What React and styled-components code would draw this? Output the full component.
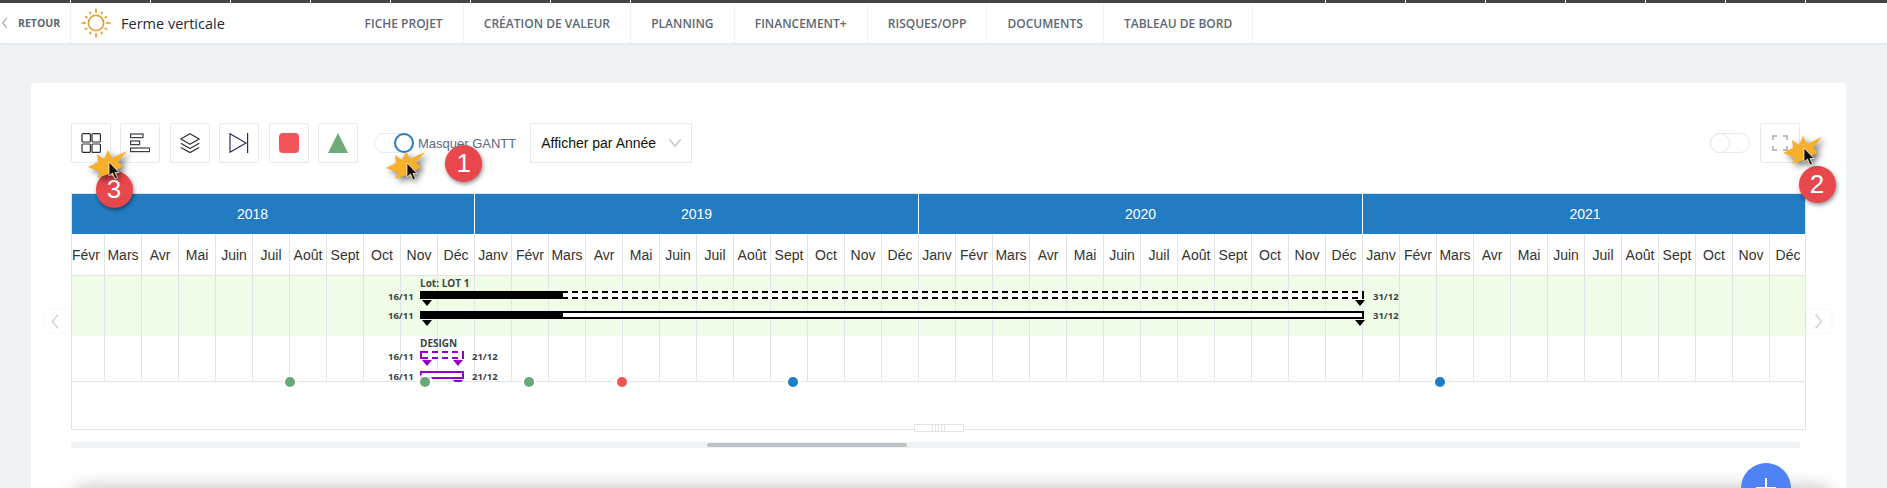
import React from "react";
import styled, { createGlobalStyle } from "styled-components";

const GlobalStyle = createGlobalStyle`
html, body {
    margin: 0;
    height: 488px;
    overflow: hidden;
    background: #f0f3f5;
}
* { box-sizing: border-box; }
`

const Page = styled.div`
position: relative;
width: 1887px;
height: 488px;
overflow: hidden;
font-family: "Liberation Sans", Arial, sans-serif;
`
const Strip = styled.div`
display: flex;
height: 3px;
background: #444444;
`
const Tick = styled.span`
width: 80px;
margin-left: ${p => p.$gap || 0}px;
border-left: 1px solid #ffffff;
`
const Header = styled.header`
position: relative;
display: flex;
height: 40px;
background: #ffffff;
box-shadow: 0 1px 3px rgba(0, 0, 0, .07);
font-family: "Open Sans", sans-serif;
`
const Back = styled.div`
display: flex;
align-items: center;
gap: 7px;
width: 71px;
padding-left: 1px;
border-right: 1px solid #f0f2f3;
font-size: 10.5px;
font-weight: 700;
color: #5c6670;
`
const Brand = styled.div`
display: flex;
align-items: center;
gap: 10px;
width: 273.5px;
padding-left: 10px;
`
const Title = styled.h1`
margin: 0;
font-size: 14.5px;
font-weight: 500;
color: #222a35;
`
const Nav = styled.nav`
display: flex;
`
const NavItem = styled.a`
display: flex;
align-items: center;
padding: 0 20.1px;
border-right: 1px solid #f0f2f3;
font-size: 12px;
font-weight: 600;
color: #5c6873;
white-space: nowrap;
`
const Main = styled.main`
padding: 40px 41px 0 31px;
`
const Card = styled.section`
height: 500px;
padding: 40px 40px 0;
background: #ffffff;
border-radius: 4px;
`
const Toolbar = styled.div`
display: flex;
align-items: center;
height: 40px;
margin-bottom: 30px;
`
const ToolGroup = styled.div`
display: flex;
gap: 9.4px;
`
const ToolButton = styled.button`
display: flex;
align-items: center;
justify-content: center;
width: 40px;
height: 40px;
margin: 0 ${p => p.$mr || 0}px 0 ${p => p.$ml || 0}px;
padding: 0;
background: #ffffff;
border: 1px solid #e7eaec;
border-radius: 2px;
`
const Toggle = styled.span`
display: flex;
justify-content: ${p => (p.$on ? "flex-end" : "flex-start")};
width: 40px;
height: 20px;
margin-left: ${p => p.$offset}px;
border: 1px solid #e7eaec;
border-radius: 10px;
background: #ffffff;
`
const Knob = styled.span`
width: 20px;
height: 20px;
margin: -1px;
border: ${p => (p.$on ? "2px solid #237cc2" : "1px solid #e2e5e7")};
border-radius: 50%;
background: #ffffff;
`
const ToggleLabel = styled.span`
margin: 0 14px 0 4px;
font-size: 13px;
color: #5a6b7b;
white-space: nowrap;
`
const Select = styled.div`
display: flex;
align-items: center;
justify-content: space-between;
width: 162px;
height: 40px;
padding: 0 9px 0 10px;
border: 1px solid #e7eaec;
font-size: 14px;
color: #111111;
`
const Spacer = styled.div`
flex: 1;
`
const Frame = styled.div`
position: relative;
width: 1735px;
height: 237px;
border: 1px solid #e2e5e8;
`
const Viewport = styled.div`
height: 100%;
overflow: hidden;
`
const Inner = styled.div`
width: 1776px;
margin-left: -41px;
`
const Years = styled.div`
display: grid;
grid-template-columns: repeat(4, 1fr);
height: 40px;
background: #237cc2;
`
const Year = styled.div`
display: flex;
align-items: center;
justify-content: center;
border-right: 1px solid #ffffff;
font-size: 14px;
color: #ffffff;
&:last-child { border-right: 0; }
`
const Months = styled.div`
display: grid;
grid-template-columns: repeat(48, 1fr);
height: 42px;
border-bottom: 1px solid #e2e5e8;
`
const Month = styled.div`
display: flex;
align-items: center;
justify-content: center;
border-right: 1px solid #e2e5e8;
font-size: 14px;
color: #333333;
white-space: nowrap;
`
const Rows = styled.div`
position: relative;
`
const Row = styled.div`
display: grid;
grid-template-columns: repeat(48, 1fr);
height: ${p => p.$height}px;
background: ${p => p.$bg};
border-bottom: ${p => (p.$line ? "1px solid #e2e5e8" : "0")};
`
const Cell = styled.span`
border-right: 1px solid #e2e5e8;
`
const BarLayer = styled.div`
position: absolute;
inset: 0;
overflow: hidden;
font-family: "Open Sans", sans-serif;
`
// everything on the time line is placed from page coordinates
const toX = x => x - 31;
const toY = y => y - 276;

const Label = styled.span`
position: absolute;
left: ${p => toX(p.$x)}px;
top: ${p => toY(p.$y)}px;
font-size: ${p => (p.$title ? 10 : 9.5)}px;
font-weight: 700;
line-height: 12px;
color: #3c4248;
white-space: nowrap;
`
const Bar = styled.div`
position: absolute;
left: ${p => toX(p.$x)}px;
top: ${p => toY(p.$y)}px;
width: ${p => p.$w}px;
height: 8px;
background-color: #ffffff;
${p => p.$dashed
    ? `
    border-left: 2px solid ${p.$color};
    border-right: 2px solid ${p.$color};
    background-image:
        repeating-linear-gradient(90deg, ${p.$color} 0 6px, transparent 6px 10px),
        repeating-linear-gradient(90deg, ${p.$color} 0 6px, transparent 6px 10px);
    background-size: 100% 2px;
    background-position: top, bottom;
    background-repeat: no-repeat;
    `
    : `border: 2px solid ${p.$color};`}
`
const Progress = styled.div`
position: absolute;
left: -2px;
top: ${p => (p.$dashed ? 0 : -2)}px;
width: 143px;
height: 8px;
background: #000000;
`
const Arrow = styled.span`
position: absolute;
left: ${p => toX(p.$x)}px;
top: ${p => toY(p.$y)}px;
width: 0;
height: 0;
border-left: 5px solid transparent;
border-right: 5px solid transparent;
border-top: 6px solid ${p => p.$color};
`
const Dot = styled.span`
position: absolute;
left: ${p => toX(p.$x) - 5}px;
top: 100.5px;
width: 10px;
height: 10px;
border-radius: 50%;
background: ${p => p.$color};
box-shadow: 0 0 0 3px rgba(255, 255, 255, .85);
`
const SideArrow = styled.div`
position: absolute;
top: 116px;
${p => (p.$left ? "left: -27px;" : "right: -26px;")}
display: flex;
align-items: center;
justify-content: center;
width: 24px;
height: 22px;
background: #ffffff;
box-shadow: 0 0 4px rgba(0, 0, 0, .06);
`
const Handle = styled.div`
position: absolute;
left: 50%;
bottom: -3px;
display: flex;
align-items: center;
justify-content: center;
gap: 2px;
width: 50px;
height: 8px;
margin-left: -25px;
background: #ffffff;
border: 1px solid #e2e5e8;
`
const Grip = styled.span`
width: 1px;
height: 100%;
background: #e2e5e8;
`
const Scrollbar = styled.div`
width: 1728.5px;
height: 6px;
margin-top: 12px;
padding-top: 1px;
background: #f0f3f5;
`
const Thumb = styled.div`
width: 200px;
height: 4px;
margin-left: 636px;
border-radius: 2px;
background: #bcc3c8;
`
const NextPanel = styled.div`
position: relative;
width: 1752px;
height: 80px;
margin: 42px 0 0 5px;
background: #ffffff;
border-radius: 4px;
box-shadow: 0 0 20px rgba(0, 0, 0, .32);
`
const Fab = styled.button`
position: absolute;
right: 37px;
top: -27px;
width: 50px;
height: 50px;
padding: 0;
border: 0;
border-radius: 50%;
background: #4f83f5;
&::before, &::after {
    content: "";
    position: absolute;
    background: #ffffff;
}
&::before { left: 24px; top: 15px; width: 2px; height: 20px; }
&::after { left: 15px; top: 24px; width: 20px; height: 2px; }
`
const Badge = styled.span`
position: absolute;
left: ${p => p.$x - 18.5}px;
top: ${p => p.$y - 18.5}px;
display: flex;
align-items: center;
justify-content: center;
width: 37px;
height: 37px;
border-radius: 50%;
background: #e8474c;
box-shadow: 1px 2px 4px rgba(0, 0, 0, .45);
font-size: 26px;
color: #ffffff;
`
const BurstWrap = styled.svg`
position: absolute;
left: ${p => p.$x - 21}px;
top: ${p => p.$y - 12}px;
overflow: visible;
`
const BurstStar = styled.polygon`
fill: #f6b02c;
filter: drop-shadow(3px 3px 3px rgba(0, 0, 0, .55));
`

const MONTH_NAMES = ["Janv", "Févr", "Mars", "Avr", "Mai", "Juin", "Juil", "Août", "Sept", "Oct", "Nov", "Déc"];
const YEARS = ["2018", "2019", "2020", "2021"];
// janv 2018 is scrolled out of the viewport, its column stays empty
const MONTHS = YEARS.flatMap(y => MONTH_NAMES.map(m => ({ key: `${y}-${m}`, label: y === "2018" && m === "Janv" ? "" : m })));
const MENU = ["FICHE PROJET", "CRÉATION DE VALEUR", "PLANNING", "FINANCEMENT+", "RISQUES/OPP", "DOCUMENTS", "TABLEAU DE BORD"];
const DOTS = [
    { x: 290, color: "#6aa878" },
    { x: 425, color: "#6aa878" },
    { x: 529, color: "#6aa878" },
    { x: 622, color: "#f25353" },
    { x: 793, color: "#1d7ec8" },
    { x: 1440, color: "#1d7ec8" },
];
const PURPLE = "#9400c8";

function Sun() {
    const rays = Array.from({ length: 12 }, (_, i) => i * 30);
    return (
        <svg width="30" height="30" viewBox="0 0 30 30" fill="none" stroke="#e9a23b" strokeWidth="1.8">
            <circle cx="15" cy="15" r="7.6" />
            {rays.map(a => (
                <line key={a} x1="15" y1={a % 90 === 0 ? 0.5 : 2} x2="15" y2="5" transform={`rotate(${a} 15 15)`} />
            ))}
        </svg>
    );
}

function Chevron({ dir = "left", color, size = 10 }) {
    const pts = { left: "7,1 2,6 7,11", right: "3,1 8,6 3,11", down: "1,3 6,8 11,3" }[dir];
    return (
        <svg width={size} height={size * 1.2} viewBox="0 0 12 12" fill="none" stroke={color} strokeWidth="1.2" preserveAspectRatio="none">
            <polyline points={pts} />
        </svg>
    );
}

function GridIcon() {
    return (
        <svg width="20" height="20" viewBox="0 0 20 20" fill="none" stroke="#2c2f38" strokeWidth="1.2">
            <rect x="1" y="0.6" width="8.4" height="8.4" rx="1" />
            <rect x="11" y="0.6" width="8.4" height="8.4" rx="1" />
            <rect x="1" y="11" width="8.4" height="8.4" rx="1" />
            <rect x="11" y="11" width="8.4" height="8.4" rx="1" />
        </svg>
    );
}

function GanttIcon() {
    return (
        <svg width="20" height="20" viewBox="0 0 20 20" fill="none" stroke="#3c3f48" strokeWidth="1.2">
            <rect x="0.6" y="1" width="12.4" height="3.6" />
            <rect x="0.6" y="8" width="9" height="3.6" />
            <rect x="0.6" y="15" width="19" height="3.6" />
        </svg>
    );
}

function LayersIcon() {
    return (
        <svg width="20" height="20" viewBox="0 0 20 20" fill="none" stroke="#2c2f38" strokeWidth="1.2" strokeLinejoin="round">
            <path d="M10 .8 19.2 6 10 11.2 .8 6Z" />
            <path d="M.8 10.2 10 15.4 19.2 10.2" />
            <path d="M.8 14.4 10 19.6 19.2 14.4" />
        </svg>
    );
}

function StepIcon() {
    return (
        <svg width="20" height="20" viewBox="0 0 20 20" fill="none" stroke="#2c2c58" strokeWidth="1.2">
            <path d="M1 .8 17 10 1 19.2Z" />
            <path d="M18.6 0V20" />
        </svg>
    );
}

function StopIcon() {
    return (
        <svg width="20" height="20" viewBox="0 0 20 20">
            <rect width="20" height="20" rx="4" fill="#f25557" />
        </svg>
    );
}

function TriangleIcon() {
    return (
        <svg width="20" height="20" viewBox="0 0 20 20">
            <path d="M10 0 20 20H0Z" fill="#6bab78" />
        </svg>
    );
}

function FullscreenIcon() {
    return (
        <svg width="16" height="16" viewBox="0 0 16 16" fill="none" stroke="#b9bfc5" strokeWidth="2">
            <path d="M1 5V1H5M11 1H15V5M15 11V15H11M5 15H1V11" />
        </svg>
    );
}

// starburst with the mouse pointer of the tutorial annotations
function Burst({ x, y }) {
    return (
        <BurstWrap $x={x} $y={y} width="52" height="40" viewBox="0 0 52 40">
            <BurstStar points="0,17 10,12 9,4 16,9 20,0 24,8 39,1 30,12 35,16 29,20 28,28 21,24 9,28 12,22" />
            <polygon
                points="21,12 21,26 24.5,23 27,29 29.5,28 27,22.5 31,22.5"
                fill="#111111"
                stroke="#ffffff"
                strokeWidth=".7"
            />
        </BurstWrap>
    );
}

function App() {
    return (
        <Page>
            <GlobalStyle />
            <Strip>
                {Array.from({ length: 8 }, (_, i) => <Tick key={i} $gap={i === 0 ? 70 : 0} />)}
                {Array.from({ length: 7 }, (_, i) => <Tick key={i} $gap={i === 0 ? 615 : 0} />)}
            </Strip>
            <Header>
                <Back>
                    <Chevron color="#9aa3aa" size={10} />
                    RETOUR
                </Back>
                <Brand>
                    <Sun />
                    <Title>Ferme verticale</Title>
                </Brand>
                <Nav>
                    {MENU.map(m => <NavItem key={m}>{m}</NavItem>)}
                </Nav>
            </Header>
            <Main>
                <Card>
                    <Toolbar>
                        <ToolGroup>
                            <ToolButton><GridIcon /></ToolButton>
                            <ToolButton><GanttIcon /></ToolButton>
                            <ToolButton><LayersIcon /></ToolButton>
                            <ToolButton><StepIcon /></ToolButton>
                            <ToolButton><StopIcon /></ToolButton>
                            <ToolButton><TriangleIcon /></ToolButton>
                        </ToolGroup>
                        <Toggle $on $offset={16}><Knob $on /></Toggle>
                        <ToggleLabel>Masquer GANTT</ToggleLabel>
                        <Select>
                            Afficher par Année
                            <Chevron dir="down" color="#c5cbd0" size={14} />
                        </Select>
                        <Spacer />
                        <Toggle $offset={0}><Knob /></Toggle>
                        <ToolButton $ml={10} $mr={6}><FullscreenIcon /></ToolButton>
                    </Toolbar>
                    <Frame>
                        <Viewport>
                            <Inner>
                                <Years>
                                    {YEARS.map(y => <Year key={y}>{y}</Year>)}
                                </Years>
                                <Months>
                                    {MONTHS.map(m => <Month key={m.key}>{m.label}</Month>)}
                                </Months>
                                <Rows>
                                    <Row $height={60} $bg="#effde8">
                                        {MONTHS.map(m => <Cell key={m.key} />)}
                                    </Row>
                                    <Row $height={46} $bg="#ffffff" $line>
                                        {MONTHS.map(m => <Cell key={m.key} />)}
                                    </Row>
                                    <BarLayer>
                                        <Label $x={420} $y={276.5} $title>Lot: LOT 1</Label>
                                        <Label $x={388} $y={291}>16/11</Label>
                                        <Bar $x={420} $y={291} $w={944} $color="#000000" $dashed><Progress $dashed /></Bar>
                                        <Arrow $x={422} $y={300} $color="#000000" />
                                        <Arrow $x={1355} $y={300} $color="#000000" />
                                        <Label $x={1373} $y={291}>31/12</Label>
                                        <Label $x={388} $y={310}>16/11</Label>
                                        <Bar $x={420} $y={311} $w={944} $color="#000000"><Progress /></Bar>
                                        <Arrow $x={422} $y={320} $color="#000000" />
                                        <Arrow $x={1355} $y={320} $color="#000000" />
                                        <Label $x={1373} $y={310}>31/12</Label>
                                        <Label $x={420} $y={336.5} $title>DESIGN</Label>
                                        <Label $x={388} $y={351}>16/11</Label>
                                        <Bar $x={420} $y={351} $w={44} $color={PURPLE} $dashed />
                                        <Arrow $x={422} $y={360} $color={PURPLE} />
                                        <Arrow $x={453} $y={360} $color={PURPLE} />
                                        <Label $x={472} $y={351}>21/12</Label>
                                        <Label $x={388} $y={371}>16/11</Label>
                                        <Bar $x={420} $y={371} $w={44} $color={PURPLE} />
                                        <Arrow $x={453} $y={380} $color={PURPLE} />
                                        <Label $x={472} $y={371}>21/12</Label>
                                    </BarLayer>
                                    {DOTS.map(d => <Dot key={d.x} $x={d.x} $color={d.color} />)}
                                </Rows>
                            </Inner>
                        </Viewport>
                        <SideArrow $left><Chevron color="#cfd5da" size={14} /></SideArrow>
                        <SideArrow><Chevron dir="right" color="#cfd5da" size={14} /></SideArrow>
                        <Handle>
                            <Grip /><Grip /><Grip /><Grip /><Grip />
                        </Handle>
                    </Frame>
                    <Scrollbar><Thumb /></Scrollbar>
                    <NextPanel><Fab /></NextPanel>
                </Card>
            </Main>
            <Badge $x={463.7} $y={163.3}>1</Badge>
            <Badge $x={1817} $y={184}>2</Badge>
            <Badge $x={114} $y={189}>3</Badge>
            <Burst x={406.7} y={163} />
            <Burst x={1804} y={148} />
            <Burst x={109} y={162} />
        </Page>
    );
}

export default App;
